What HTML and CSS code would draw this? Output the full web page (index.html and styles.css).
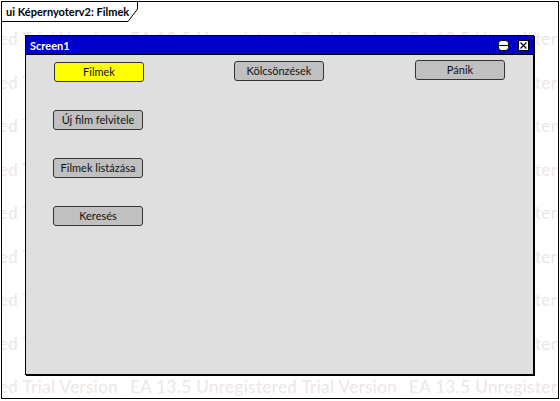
FILE: index.html
```html
<!DOCTYPE html>
<html>
<head>
<meta charset="utf-8">
<link rel="stylesheet" href="styles.css">
</head>
<body>
<div class="frame">
  <div class="watermark" aria-hidden="true">
    <div class="wm-row"><span>EA 13.5 Unregistered Trial Version</span><span>EA 13.5 Unregistered Trial Version</span><span>EA 13.5 Unregistered Trial Version</span></div>
    <div class="wm-row"><span>EA 13.5 Unregistered Trial Version</span><span>EA 13.5 Unregistered Trial Version</span><span>EA 13.5 Unregistered Trial Version</span></div>
    <div class="wm-row"><span>EA 13.5 Unregistered Trial Version</span><span>EA 13.5 Unregistered Trial Version</span><span>EA 13.5 Unregistered Trial Version</span></div>
    <div class="wm-row"><span>EA 13.5 Unregistered Trial Version</span><span>EA 13.5 Unregistered Trial Version</span><span>EA 13.5 Unregistered Trial Version</span></div>
    <div class="wm-row"><span>EA 13.5 Unregistered Trial Version</span><span>EA 13.5 Unregistered Trial Version</span><span>EA 13.5 Unregistered Trial Version</span></div>
    <div class="wm-row"><span>EA 13.5 Unregistered Trial Version</span><span>EA 13.5 Unregistered Trial Version</span><span>EA 13.5 Unregistered Trial Version</span></div>
    <div class="wm-row"><span>EA 13.5 Unregistered Trial Version</span><span>EA 13.5 Unregistered Trial Version</span><span>EA 13.5 Unregistered Trial Version</span></div>
    <div class="wm-row"><span>EA 13.5 Unregistered Trial Version</span><span>EA 13.5 Unregistered Trial Version</span><span>EA 13.5 Unregistered Trial Version</span></div>
    <div class="wm-row"><span>EA 13.5 Unregistered Trial Version</span><span>EA 13.5 Unregistered Trial Version</span><span>EA 13.5 Unregistered Trial Version</span></div>
  </div>

  <div class="tab">
    <span class="tab-label">ui Képernyoterv2: Filmek</span>
    <svg class="tab-corner" width="11" height="20" viewBox="0 0 11 20"><path d="M0 19.5 L9.5 7 L9.5 0" fill="none" stroke="#000" stroke-width="1"/></svg>
  </div>

  <div class="window">
    <div class="titlebar">
      <span class="title">Screen1</span>
      <div class="controls">
        <div class="ctrl">
          <svg width="11" height="11" viewBox="0 0 11 11"><rect x="0.5" y="0.5" width="10" height="10" rx="3" fill="#fff" stroke="#000"/><line x1="0.5" y1="5.5" x2="10.5" y2="5.5" stroke="#000"/></svg>
        </div>
        <div class="ctrl">
          <svg width="11" height="11" viewBox="0 0 11 11"><rect x="0.5" y="0.5" width="10" height="10" fill="#fff" stroke="#000"/><path d="M2.5 2.5 L8.5 8.5 M8.5 2.5 L2.5 8.5" stroke="#000" stroke-width="1.2"/></svg>
        </div>
      </div>
    </div>
    <div class="body">
      <div class="top-row">
        <div class="btn yellow b-filmek">Filmek</div>
        <div class="btn b-kolcs">Kölcsönzések</div>
        <div class="btn b-panik">Pánik</div>
      </div>
      <div class="col">
        <div class="btn">Új film felvitele</div>
        <div class="btn">Filmek listázása</div>
        <div class="btn">Keresés</div>
      </div>
    </div>
  </div>
</div>
</body>
</html>
```

FILE: styles.css
```css
html, body {
  margin: 0;
  padding: 0;
  background: #fff;
}
body {
  font-family: Lato, "Open Sans", sans-serif;
}
.frame {
  position: relative;
  margin: 1px 0 0 1px;
  width: 558px;
  height: 398px;
  box-sizing: border-box;
  border: 1px solid #000;
  overflow: hidden;
}
.watermark {
  position: absolute;
  top: 0;
  left: 0;
  padding-top: 15px;
  margin-left: -151px;
  z-index: 0;
  white-space: nowrap;
  color: #ece6e6;
  font-family: Lato, sans-serif;
  font-size: 17px;
  letter-spacing: 0.4px;
}
.wm-row {
  height: 43.5px;
  line-height: 43.5px;
  display: flex;
}
.wm-row span {
  display: block;
  width: 279px;
  flex: none;
}
.tab {
  position: relative;
  z-index: 1;
  display: flex;
  align-items: flex-start;
  height: 20px;
}
.tab-label {
  box-sizing: border-box;
  width: 126px;
  height: 20px;
  border-bottom: 1px solid #000;
  padding-left: 4px;
  font-size: 11px;
  font-weight: bold;
  line-height: 19px;
  color: #000;
  white-space: nowrap;
}
.tab-corner {
  display: block;
}
.window {
  position: relative;
  z-index: 1;
  margin: 13px 0 0 23px;
  width: 509px;
  height: 340px;
  box-sizing: border-box;
  border: 1px solid #000;
  box-shadow: 1px 1px 0 #000;
  display: flex;
  flex-direction: column;
}
.titlebar {
  height: 18px;
  background: #0000cc;
  border-bottom: 1px solid #000;
  display: flex;
  align-items: center;
}
.title {
  color: #fff;
  font-size: 11px;
  font-weight: bold;
  padding-left: 4px;
  flex: 1;
}
.controls {
  display: flex;
  height: 100%;
}
.ctrl {
  width: 19px;
  border-left: 1px solid #000;
  display: flex;
  align-items: center;
  justify-content: center;
}
.ctrl svg {
  display: block;
}
.body {
  flex: 1;
  background: #dfdfdf;
  padding-top: 5px;
}
.top-row {
  display: flex;
  align-items: flex-start;
  padding-left: 28px;
  gap: 90px;
}
.b-filmek { margin-top: 2px; }
.b-kolcs { margin-top: 1px; }
.b-panik { margin-left: 1px; }
.col {
  display: flex;
  flex-direction: column;
  gap: 28px;
  margin-top: 28px;
  padding-left: 27px;
}
.btn {
  box-sizing: border-box;
  width: 90px;
  height: 20px;
  border: 1px solid #333;
  border-radius: 3px;
  background: #c0c0c0;
  font-size: 11px;
  line-height: 18px;
  text-align: center;
  color: #111;
  white-space: nowrap;
}
.btn.yellow {
  background: #ffff00;
}
```
